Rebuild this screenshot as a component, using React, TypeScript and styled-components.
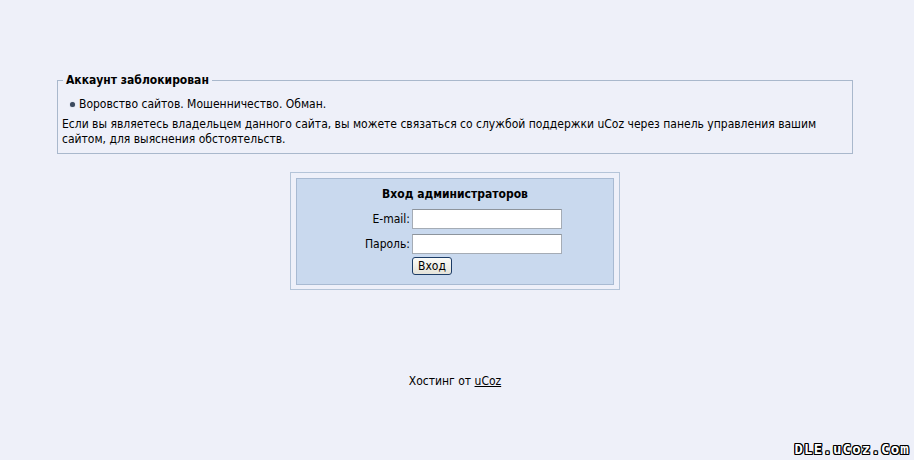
import React from 'react';
import styled, { createGlobalStyle } from 'styled-components';

const GlobalStyle = createGlobalStyle`
    html, body {
        margin: 0;
        padding: 0;
        background: #eef0f9;
    }
    body {
        font-family: "DejaVu Sans Condensed", "DejaVu Sans", sans-serif;
        font-size: 12px;
        color: #000;
    }
`;

const Page = styled.div`
    position: relative;
    width: 914px;
    height: 460px;
    padding-top: 73px;
    box-sizing: border-box;
`;

const Notice = styled.fieldset`
    margin: 0 0 0 57px;
    width: 796px;
    box-sizing: border-box;
    border: 1px solid #a9b8cc;
    padding: 5px 4px 5px 4px;
    min-height: 81px;
`;

const Legend = styled.legend`
    font-weight: bold;
    font-size: 12px;
    padding: 0 3px;
    margin-left: 1px;
`;

const Reasons = styled.ul`
    margin: 5px 0 5px 0;
    padding: 0 0 0 17px;
    list-style: none;
`;

const Reason = styled.li`
    position: relative;
    line-height: 15px;
    &::before {
        content: '';
        position: absolute;
        left: -9px;
        top: 5px;
        width: 5px;
        height: 5px;
        border-radius: 50%;
        background: #3c4a5e;
        box-shadow: 0 0 1px #8090a8;
    }
`;

const Text = styled.div`
    line-height: 15px;
`;

const LoginOuter = styled.div`
    width: 330px;
    margin: 18px 0 0 290px;
    box-sizing: border-box;
    border: 1px solid #b4c4d8;
    padding: 5px 5px 4px;
`;

const LoginInner = styled.form`
    background: #c9d9ee;
    border: 1px solid #a8bad2;
    padding: 8px 0 9px;
    display: grid;
    grid-template-columns: 113px 1fr;
    row-gap: 5px;
    column-gap: 2px;
    align-items: center;
`;

const LoginTitle = styled.div`
    grid-column: 1 / 3;
    text-align: center;
    font-weight: bold;
    font-size: 12px;
    line-height: 15px;
    margin-bottom: 2px;
`;

const Label = styled.label`
    text-align: right;
`;

const Input = styled.input`
    width: 150px;
    height: 20px;
    box-sizing: border-box;
    border: 1px solid #a5acb5;
    border-top-color: #8d949c;
    background: #fff;
    margin: 0;
    padding: 1px 2px;
    font: inherit;
`;

const Button = styled.button`
    grid-column: 2;
    justify-self: start;
    height: 18px;
    padding: 0 5px;
    margin: -2px 0 0;
    font: inherit;
    font-size: 12px;
    color: #000;
    border: 1px solid #1c3c66;
    border-radius: 3px;
    background: linear-gradient(#fbfbf8, #e4e3da);
`;

const Footer = styled.div`
    text-align: center;
    margin-top: 84px;
    padding-right: 4px;
    a {
        color: #000;
        text-decoration: underline;
    }
`;

const Watermark = styled.div`
    position: absolute;
    right: 4px;
    bottom: 4px;
    font-family: "DejaVu Sans Mono", monospace;
    font-weight: bold;
    font-size: 14px;
    line-height: 14px;
    color: #fff;
    letter-spacing: 1.2px;
    text-shadow: 1px 0 #000, -1px 0 #000, 0 1px #000, 0 -1px #000,
        1px 1px #000, -1px -1px #000, 1px -1px #000, -1px 1px #000;
`;

function App() {
    return (
        <Page>
            <GlobalStyle />
            <Notice>
                <Legend>Аккаунт заблокирован</Legend>
                <Reasons>
                    <Reason>Воровство сайтов. Мошенничество. Обман.</Reason>
                </Reasons>
                <Text>
                    Если вы являетесь владельцем данного сайта, вы можете связаться со службой поддержки uCoz через панель управления вашим сайтом, для выяснения обстоятельств.
                </Text>
            </Notice>
            <LoginOuter>
                <LoginInner onSubmit={(e) => e.preventDefault()}>
                    <LoginTitle>Вход администраторов</LoginTitle>
                    <Label>E-mail:</Label>
                    <Input type="text" />
                    <Label>Пароль:</Label>
                    <Input type="password" />
                    <Button type="submit">Вход</Button>
                </LoginInner>
            </LoginOuter>
            <Footer>
                Хостинг от <a href="#">uCoz</a>
            </Footer>
            <Watermark>DLE.uCoz.Com</Watermark>
        </Page>
    );
}
export default App;
